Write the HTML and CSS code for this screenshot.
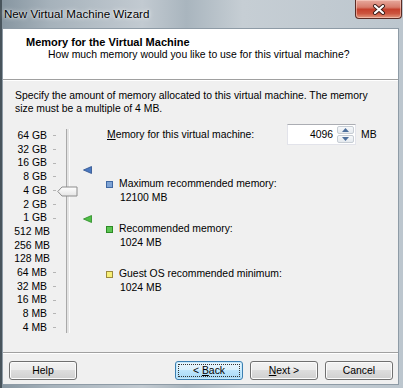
FILE: index.html
```html
<!DOCTYPE html>
<html>
<head>
    <title>New Virtual Machine Wizard</title>
    <link rel="stylesheet" href="styles.css">
</head>
<body>
    <div class="window">
        <div class="titlebar">
            <span class="window-title">New Virtual Machine Wizard</span>
            <button class="close-btn">
                <svg width="14" height="11" viewBox="0 0 14 11">
                    <path d="M3 2 L11 9 M11 2 L3 9" stroke="#3a1c18" stroke-width="4" stroke-linecap="round"/>
                    <path d="M3 2 L11 9 M11 2 L3 9" stroke="#ffffff" stroke-width="2.2" stroke-linecap="round"/>
                </svg>
            </button>
        </div>

        <div class="client">
            <div class="header">
                <h1 class="page-title">Memory for the Virtual Machine</h1>
                <p class="page-subtitle">How much memory would you like to use for this virtual machine?</p>
            </div>

            <div class="content">
                <p class="intro">Specify the amount of memory allocated to this virtual machine. The memory<br>size must be a multiple of 4 MB.</p>

                <div class="memory-panel">
                    <div class="scale">
                        <ul class="scale-labels">
                            <li>64 GB</li>
                            <li>32 GB</li>
                            <li>16 GB</li>
                            <li>8 GB</li>
                            <li>4 GB</li>
                            <li>2 GB</li>
                            <li>1 GB</li>
                            <li>512 MB</li>
                            <li>256 MB</li>
                            <li>128 MB</li>
                            <li>64 MB</li>
                            <li>32 MB</li>
                            <li>16 MB</li>
                            <li>8 MB</li>
                            <li>4 MB</li>
                        </ul>
                        <div class="track"></div>

                        <!-- thumb and markers sit on the scale at their values -->
                        <svg class="thumb" width="21" height="11" viewBox="0 0 21 11">
                            <defs>
                                <linearGradient id="thumbFill" x1="0" y1="0" x2="0" y2="1">
                                    <stop offset="0" stop-color="#ffffff"/>
                                    <stop offset="1" stop-color="#e4e4e4"/>
                                </linearGradient>
                            </defs>
                            <path d="M0.8 5.5 L5 1 H20 V10 H5 Z" fill="url(#thumbFill)" stroke="#8c8c8c" stroke-width="1"/>
                        </svg>
                        <svg class="marker marker-max" width="9" height="8" viewBox="0 0 9 8">
                            <polygon points="0.5,4 8.5,0.5 8.5,7.5" fill="#4a78c0" stroke="#2c4f8c" stroke-width="0.8"/>
                        </svg>
                        <svg class="marker marker-rec" width="9" height="8" viewBox="0 0 9 8">
                            <polygon points="0.5,4 8.5,0.5 8.5,7.5" fill="#4fbf45" stroke="#2a8a24" stroke-width="0.8"/>
                        </svg>
                    </div>

                    <div class="settings">
                        <div class="memory-row">
                            <label class="memory-label"><u>M</u>emory for this virtual machine:</label>
                            <div class="spinner">
                                <span class="spinner-value">4096</span>
                                <div class="spin-buttons">
                                    <span class="spin-btn">
                                        <svg width="7" height="4" viewBox="0 0 7 4"><polygon points="0,4 3.5,0 7,4" fill="#4d6f9c"/></svg>
                                    </span>
                                    <span class="spin-btn">
                                        <svg width="7" height="4" viewBox="0 0 7 4"><polygon points="0,0 7,0 3.5,4" fill="#4d6f9c"/></svg>
                                    </span>
                                </div>
                            </div>
                            <span class="unit">MB</span>
                        </div>

                        <div class="legend">
                            <div class="legend-item">
                                <div class="legend-title"><span class="swatch swatch-max"></span>Maximum recommended memory:</div>
                                <div class="legend-value">12100 MB</div>
                            </div>
                            <div class="legend-item">
                                <div class="legend-title"><span class="swatch swatch-rec"></span>Recommended memory:</div>
                                <div class="legend-value">1024 MB</div>
                            </div>
                            <div class="legend-item">
                                <div class="legend-title"><span class="swatch swatch-min"></span>Guest OS recommended minimum:</div>
                                <div class="legend-value">1024 MB</div>
                            </div>
                        </div>
                    </div>
                </div>
            </div>

            <div class="footer">
                <button class="btn">Help</button>
                <div class="nav-buttons">
                    <button class="btn btn-default">&lt; <u>B</u>ack</button>
                    <button class="btn"><u>N</u>ext &gt;</button>
                    <button class="btn">Cancel</button>
                </div>
            </div>
        </div>
    </div>
</body>
</html>
```

FILE: styles.css
```css
body {
    margin: 0;
    width: 403px;
    height: 388px;
    overflow: hidden;
    font-family: "Liberation Sans", Arial, sans-serif;
    font-size: 10.4px;
    color: #000;
}

.window {
    height: 388px;
    box-sizing: border-box;
    display: flex;
    flex-direction: column;
    border-left: 2px solid #48545c;
    background: linear-gradient(90deg, #8796a1 0%, #a6b2bb 12%, #c2cad1 35%, #a9b5be 46%, #c6ced4 60%, #bcc6ce 100%);
}

.titlebar {
    height: 28px;
    flex-shrink: 0;
    display: flex;
    justify-content: space-between;
    align-items: flex-start;
}

.window-title {
    padding: 6px 0 0 2px;
    font-size: 11.6px;
    line-height: 16px;
    text-shadow: 0 0 5px rgba(255, 255, 255, 0.9), 0 0 2px rgba(255, 255, 255, 0.8);
}

.close-btn {
    width: 47px;
    height: 19px;
    margin-right: 1px;
    padding: 0;
    border: 1px solid #5a2b24;
    border-top: none;
    border-radius: 0 0 4px 4px;
    background: linear-gradient(180deg, #e7a99d 0%, #d77c6c 40%, #c5412d 52%, #cc553f 75%, #e29a80 100%);
    box-shadow: inset 0 0 0 1px rgba(255, 220, 210, 0.5);
    display: flex;
    justify-content: center;
    align-items: center;
}

.client {
    flex: 1;
    margin: 0 4px 3px 0;
    border: 1px solid #8e9ba6;
    background: #f0f0f0;
    display: flex;
    flex-direction: column;
}

.header {
    height: 50px;
    flex-shrink: 0;
    background: #fff;
    border-bottom: 1px solid #a0a0a0;
    box-shadow: 0 1px 0 #fff;
    padding: 7px 0 0 23px;
    box-sizing: content-box;
}

.header {
    height: 43px;
}

.page-title {
    margin: 0;
    font-size: 11px;
    font-weight: bold;
    line-height: 13px;
}

.page-subtitle {
    margin: -1px 0 0 22px;
    line-height: 13px;
}

.content {
    flex: 1;
    padding: 9px 12px 0 12px;
}

.intro {
    margin: 0;
    line-height: 13px;
}

.memory-panel {
    display: flex;
    margin-top: 9px;
}

.scale {
    position: relative;
    width: 92px;
    padding-top: 5px;
    display: flex;
    align-items: flex-start;
}

.scale-labels {
    margin: 0;
    padding: 0;
    list-style: none;
    width: 41px;
}

.scale-labels li {
    height: 13.71px;
    line-height: 13.71px;
    display: flex;
    justify-content: flex-end;
    align-items: center;
    white-space: nowrap;
}

.scale-labels li::after {
    content: '';
    width: 3px;
    height: 1px;
    margin-left: 6px;
    background: #b5b5b5;
}

.track {
    width: 2px;
    height: 204px;
    margin-left: 10px;
    border-left: 1px solid #a9a9a9;
    border-right: 1px solid #fcfcfc;
    background: #e4e4e4;
}

.thumb {
    position: absolute;
    left: 42px;
    top: 62px;
}

.marker {
    position: absolute;
    left: 68px;
}

.marker-max {
    top: 42px;
}

.marker-rec {
    top: 91px;
}

.settings {
    display: flex;
    flex-direction: column;
}

.memory-row {
    display: flex;
    align-items: center;
    height: 21px;
}

.memory-label {
    width: 180px;
}

.spinner {
    width: 69px;
    height: 21px;
    box-sizing: border-box;
    display: flex;
    border: 1px solid #e2e3ea;
    border-top-color: #abadb3;
    background: #fff;
}

.spinner-value {
    flex: 1;
    text-align: right;
    padding-right: 4px;
    line-height: 19px;
}

.spin-buttons {
    width: 17px;
    display: flex;
    flex-direction: column;
    gap: 1px;
    padding: 1px 1px 1px 0;
}

.spin-btn {
    flex: 1;
    display: flex;
    justify-content: center;
    align-items: center;
    border: 1px solid #c7cdd4;
    border-radius: 2px;
    background: linear-gradient(180deg, #f6f8fa 0%, #e5eaef 100%);
}

.unit {
    margin-left: 5px;
}

.legend {
    display: flex;
    flex-direction: column;
    gap: 17px;
    margin-top: 32px;
}

.legend-item {
    line-height: 14px;
}

.legend-title {
    display: flex;
    align-items: center;
}

.legend-value {
    padding-left: 13px;
}

.swatch {
    width: 5px;
    height: 5px;
    margin: 0 6px 0 -1px;
    border: 1px solid;
}

.swatch-max {
    background: #7ea3d4;
    border-color: #3f68a3;
}

.swatch-rec {
    background: #5cc552;
    border-color: #2c8a25;
}

.swatch-min {
    background: #f7ef76;
    border-color: #9c8a3c;
}

.footer {
    height: 32px;
    flex-shrink: 0;
    box-sizing: border-box;
    border-top: 1px solid #a0a0a0;
    box-shadow: inset 0 1px 0 #fff;
    padding: 8px 5px 0 6px;
    display: flex;
    justify-content: space-between;
    align-items: flex-start;
}

.nav-buttons {
    display: flex;
    gap: 7px;
}

.btn {
    width: 68px;
    height: 19px;
    padding: 0;
    border: 1px solid #707070;
    border-radius: 3px;
    background: linear-gradient(180deg, #f2f2f2 0%, #ebebeb 50%, #dddddd 50%, #cfcfcf 100%);
    box-shadow: inset 0 0 0 1px #fbfbfb;
    font-family: "Liberation Sans", Arial, sans-serif;
    font-size: 10.4px;
    color: #000;
}

.btn-default {
    border-color: #3c7fb1;
    background: linear-gradient(180deg, #eaf6fd 0%, #d9f0fc 50%, #bee6fd 50%, #a7d9f5 100%);
    box-shadow: inset 0 0 0 1px #c6e9fb;
    outline: 1px dotted #333;
    outline-offset: -4px;
}
```
